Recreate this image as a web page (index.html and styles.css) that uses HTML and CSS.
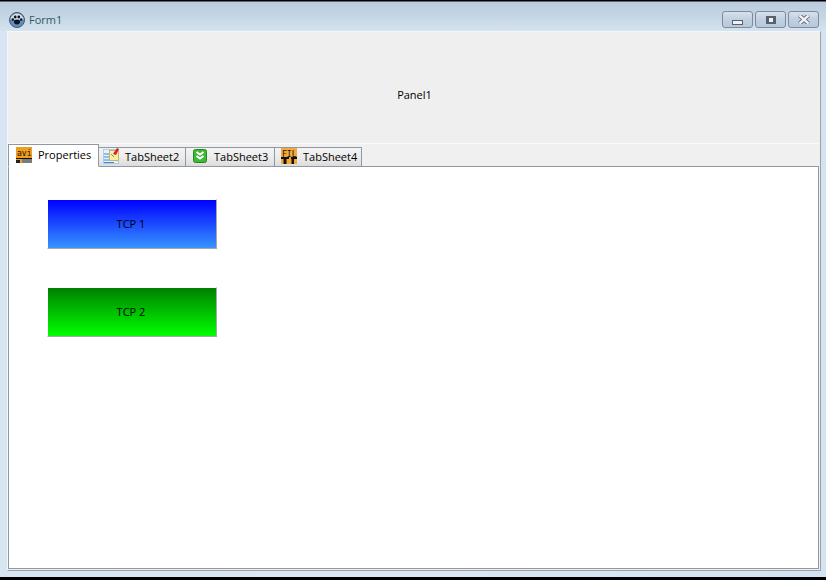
FILE: index.html
```html
<!DOCTYPE html>
<html lang="en">
<head>
    <meta charset="UTF-8">
    <title>Form1</title>
    <link rel="stylesheet" href="styles.css">
</head>
<body>

    <div class="window">

        <!-- Title Bar -->
        <div class="titlebar">
            <svg class="app-icon" width="16" height="16" viewBox="0 0 16 16">
                <circle cx="8" cy="8" r="7.5" fill="#5f8fc0" stroke="#44566c"/>
                <path d="M1.5 8a6.5 6.5 0 0 1 13 0z" fill="#d5dfe9"/>
                <ellipse cx="8" cy="10" rx="3" ry="2.4" fill="#0b1420"/>
                <circle cx="3.8" cy="7.6" r="1.3" fill="#0b1420"/>
                <circle cx="6.2" cy="5" r="1.4" fill="#0b1420"/>
                <circle cx="9.8" cy="5" r="1.4" fill="#0b1420"/>
                <circle cx="12.2" cy="7.6" r="1.3" fill="#0b1420"/>
            </svg>
            <span class="title">Form1</span>
            <div class="win-buttons">
                <div class="win-btn"><span class="glyph-min"></span></div>
                <div class="win-btn"><span class="glyph-max"></span></div>
                <div class="win-btn">
                    <svg width="12" height="9" viewBox="0 0 12 9">
                        <path d="M1.500 0.500l9 8M10.500 0.500l-9 8" stroke="#5c6474" stroke-width="4.200"/>
                        <path d="M1.500 0.500l9 8M10.500 0.500l-9 8" stroke="#eef1f5" stroke-width="2.400"/>
                    </svg>
                </div>
            </div>
        </div>

        <!-- Client Area -->
        <div class="client">
            <div class="panel">Panel1</div>

            <div class="tabs">
                <div class="tab active">
                    <svg class="tab-icon" width="16" height="16" viewBox="0 0 16 16">
                        <rect width="16" height="16" fill="#ef9d1c"/>
                        <text x="1" y="9" class="icon-text">avi</text>
                        <rect x="0" y="11" width="16" height="1" fill="#111"/>
                        <rect x="6" y="12" width="10" height="4" fill="#7b7b7b"/>
                        <rect x="0" y="13" width="4" height="3" fill="#222"/>
                    </svg>
                    <span>Properties</span>
                </div>
                <div class="tab tab-2">
                    <svg class="tab-icon" width="16" height="16" viewBox="0 0 16 16">
                        <rect x="0.500" y="1.500" width="15" height="14" fill="#e6f1fb" stroke="#a9cdee"/>
                        <path d="M1 6h5M1 9h5M1 12h5M1 14.500h10" stroke="#3b8fd8"/>
                        <rect x="6.500" y="2.500" width="9" height="10" fill="#fbeea0" stroke="#c9b36a"/>
                        <path d="M8 6l3 3" stroke="#888"/>
                        <path d="M10 6l4-6 2 1-3 6z" fill="#d6202a"/>
                    </svg>
                    <span>TabSheet2</span>
                </div>
                <div class="tab tab-3">
                    <svg class="tab-icon" width="14" height="14" viewBox="0 0 14 14">
                        <rect x="0.500" y="0.500" width="13" height="13" rx="2" fill="#3fb836" stroke="#24861f"/>
                        <path d="M3.500 3l3.500 2.500L10.500 3M3.500 7l3.500 2.500L10.500 7" fill="none" stroke="#fff" stroke-width="2"/>
                    </svg>
                    <span>TabSheet3</span>
                </div>
                <div class="tab tab-4">
                    <svg class="tab-icon" width="16" height="16" viewBox="0 0 16 16">
                        <rect width="16" height="16" fill="#f6a93a"/>
                        <text x="1" y="8.500" class="icon-text">FIL</text>
                        <path d="M0 9h8v2H5.500v5h-3v-5H0zM10 9h6v2h-3v5h-2.500v-5H10z" fill="#111"/>
                    </svg>
                    <span>TabSheet4</span>
                </div>
            </div>

            <div class="page">
                <div class="tcp tcp-blue">TCP 1</div>
                <div class="tcp tcp-green">TCP 2</div>
            </div>
        </div>

    </div>

</body>
</html>
```

FILE: styles.css
```css
/* General Styles */
html, body {
    margin: 0;
    padding: 0;
    height: 100%;
    overflow: hidden;
}

body {
    font-family: "Open Sans", "Noto Sans", Arial, sans-serif;
    font-size: 11px;
    color: #000;
    background: #000;
}

/* Window Frame */
.window {
    box-sizing: border-box;
    height: 576px;
    margin-top: 1px;
    display: flex;
    flex-direction: column;
    border-top: 1px solid #5b6670;
    background: linear-gradient(90deg, #d8e5f3 0, #dbe7f4 50%, #d4e3f3 100%);
}

/* Title Bar */
.titlebar {
    box-sizing: border-box;
    height: 29px;
    flex-shrink: 0;
    display: flex;
    align-items: center;
    padding: 6px 7px 0 9px;
    background: linear-gradient(180deg, #b9cbdd 0, #c8d8e6 60%, #d5e3f0 100%);
}

.title {
    margin-left: 4px;
    font-size: 11px;
    color: #2f5a5c;
}

.win-buttons {
    margin-left: auto;
    display: flex;
    gap: 2px;
}

.win-btn {
    box-sizing: border-box;
    width: 31px;
    height: 17px;
    border: 1px solid #7d8aa0;
    border-radius: 3px;
    background: linear-gradient(180deg, #d6e1ec 0, #c0d0df 50%, #b7c9da 100%);
    display: flex;
    align-items: center;
    justify-content: center;
}

.glyph-min {
    box-sizing: border-box;
    width: 11px;
    height: 5px;
    margin-top: 5px;
    border: 1px solid #59606e;
    background: #eef1f5;
}

.glyph-max {
    box-sizing: border-box;
    width: 10px;
    height: 8px;
    border: 3px solid #59606e;
    border-top-width: 2px;
    border-bottom-width: 2px;
    background: #eef1f5;
}

/* Client Area */
.client {
    flex: 1;
    min-height: 0;
    margin: 0 5px 6px 7px;
    padding: 0 1px 1px 0;
    display: flex;
    flex-direction: column;
    background: #f0f0f0;
    border-top: 1px solid #f4f7fa;
    border-left: 1px solid #f4f7fa;
    border-right: 1px solid #a0a0a0;
    border-bottom: 1px solid #a0a0a0;
}

.panel {
    box-sizing: border-box;
    height: 112px;
    flex-shrink: 0;
    display: flex;
    align-items: center;
    justify-content: center;
    padding: 14px 0 0 2px;
    background: #efefef;
    border-bottom: 1px solid #fafafa;
}

/* Tabs */
.tabs {
    height: 23px;
    flex-shrink: 0;
    display: flex;
    align-items: flex-end;
    position: relative;
    z-index: 1;
    margin-bottom: -1px;
}

.tab {
    box-sizing: border-box;
    height: 20px;
    display: flex;
    align-items: center;
    padding-bottom: 2px;
    border: 1px solid #8f98a3;
    border-left-width: 0;
    background: linear-gradient(180deg, #f3f3f3 0, #ececec 50%, #dcdcdc 100%);
}

.tab span {
    margin-left: 6px;
}

.tab.active {
    height: 23px;
    width: 91px;
    padding: 0 0 2px 7px;
    border-left-width: 1px;
    border-bottom-color: #fff;
    background: #fff;
}

.tab-2 {
    width: 87px;
    padding-left: 4px;
}

.tab-3 {
    width: 89px;
    padding-left: 7px;
}

.tab-3 span {
    margin-left: 7px;
}

.tab-4 {
    width: 87px;
    padding-left: 6px;
}

.tab-icon {
    flex-shrink: 0;
}

.icon-text {
    font-family: "DejaVu Sans Mono", monospace;
    font-size: 8px;
    fill: #111;
}

/* Tab Page */
.page {
    flex: 1;
    min-height: 0;
    background: #fff;
    border: 1px solid #8f98a3;
    padding: 32px 0 0 38px;
}

.tcp {
    box-sizing: border-box;
    width: 170px;
    height: 50px;
    display: flex;
    align-items: center;
    justify-content: center;
    padding: 0 2px 2px 0;
    border-top: 1px solid #fff;
    border-left: 1px solid #fff;
    border-right: 1px solid #a8a8a8;
    border-bottom: 1px solid #a8a8a8;
}

.tcp-blue {
    background: linear-gradient(180deg, #0000ff 0, #3794ff 100%);
    margin-bottom: 38px;
}

.tcp-green {
    background: linear-gradient(180deg, #008000 0, #00ff00 100%);
}
```
